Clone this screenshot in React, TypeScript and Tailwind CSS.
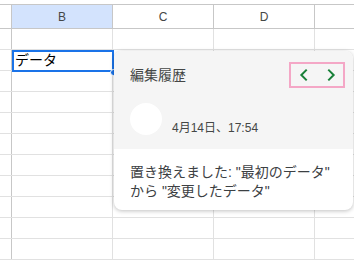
import React from 'react';

const cols = ['B', 'C', 'D'];
const rowCount = 11;

function ChevronLeft() {
  return (
    <svg width="16" height="16" viewBox="0 0 24 24" fill="none">
      <path d="M15 5l-7 7 7 7" stroke="#188038" strokeWidth="3" strokeLinecap="square" />
    </svg>
  );
}

function ChevronRight() {
  return (
    <svg width="16" height="16" viewBox="0 0 24 24" fill="none">
      <path d="M9 5l7 7-7 7" stroke="#188038" strokeWidth="3" strokeLinecap="square" />
    </svg>
  );
}

export default function App() {
  return (
    <div
      className="relative w-[354px] h-[261px] overflow-hidden bg-white"
      style={{ fontFamily: '"Liberation Sans", Arial, "Noto Sans CJK JP", sans-serif' }}
    >
      <div className="h-[5px] border-b border-[#c7c7c7]" />
      {/* header */}
      <div className="flex h-[24px] border-b border-[#c7c7c7]">
        <div className="w-[12px] shrink-0 border-r border-[#c7c7c7]" />
        {cols.map((c, i) => (
          <div
            key={c}
            className={
              'w-[101px] shrink-0 border-r border-[#c7c7c7] flex items-center justify-center text-[12px] text-[#444746] ' +
              (i === 0 ? 'bg-[#d3e3fd] text-[#0b57d0]' : '')
            }
          >
            {c}
          </div>
        ))}
        <div className="flex-1" />
      </div>
      {/* rows */}
      {Array.from({ length: rowCount }).map((_, r) => (
        <div key={r} className="flex h-[21px] border-b border-[#e1e1e1]">
          <div className="w-[12px] shrink-0 border-r border-[#c7c7c7]" />
          {cols.map((c) => (
            <div key={c} className="w-[101px] shrink-0 border-r border-[#e1e1e1] text-[14px] leading-[20px] pl-[3px] text-black">
              {r === 1 && c === 'B' ? 'データ' : ''}
            </div>
          ))}
          <div className="flex-1" />
        </div>
      ))}

      {/* selection */}
      <div className="absolute left-[12px] top-[50px] w-[102px] h-[22px] border-2 border-[#1a73e8]" />
      <div className="absolute left-[110px] top-[69px] w-[7px] h-[7px] rounded-full bg-[#1a73e8] border border-white" />

      {/* edit history card */}
      <div className="absolute left-[114px] top-[51px] w-[239px] rounded-[8px] bg-white shadow-[0_1px_4px_rgba(0,0,0,0.25)] overflow-hidden">
        <div className="bg-[#f5f5f5] pl-[16px] pr-[8px] pt-[11px] pb-[14px]">
          <div className="flex items-center justify-between">
            <span className="text-[14px] text-[#444746]">編集履歴</span>
            <div className="flex items-center gap-[11px] border-2 border-[#f4a7c6] w-[56px] h-[26px] justify-center">
              <ChevronLeft />
              <ChevronRight />
            </div>
          </div>
          <div className="flex items-end gap-[10px] mt-[15px]">
            <div className="w-[32px] h-[32px] rounded-full bg-white" />
            <span className="text-[12px] text-[#444746] leading-[16px] mb-[-1px]">4月14日、17:54</span>
          </div>
        </div>
        <div className="px-[16px] pt-[14px] pb-[9px] text-[14px] leading-[19px] text-[#3c4043]">
          置き換えました: "最初のデータ"
          <br />
          から "変更したデータ"
        </div>
      </div>
    </div>
  );
}
